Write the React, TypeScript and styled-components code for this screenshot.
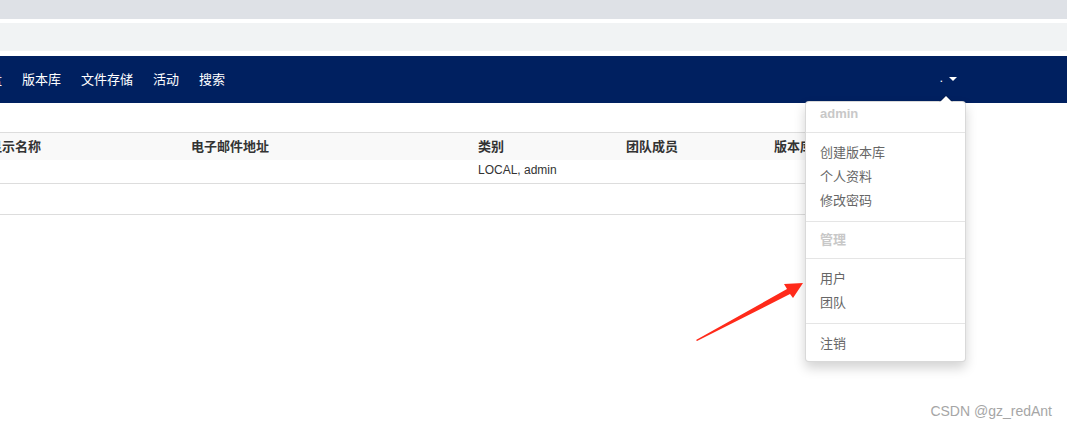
import * as React from "react";
import styled, { createGlobalStyle } from "styled-components";

const GlobalStyle = createGlobalStyle`
  html, body {
    margin: 0;
    padding: 0;
    background: #fff;
    overflow: hidden;
  }
  body {
    font-family: "Liberation Sans", "Noto Sans CJK SC", sans-serif;
    font-size: 13px;
    color: #333;
  }
`;

const Page = styled.div`
  position: relative;
  width: 1067px;
  height: 428px;
  overflow: hidden;
`;

const TabStrip = styled.div`
  height: 19px;
  background: #dee1e6;
  margin-bottom: 4px;
`;

const AddressBar = styled.div`
  height: 28px;
  background: #f1f3f4;
  margin-bottom: 5px;
`;

const NavBar = styled.nav`
  height: 47px;
  background: #002060;
  display: flex;
  align-items: center;
`;

// the page is scrolled a little to the right, so the first item is clipped
const NavList = styled.ul`
  display: flex;
  list-style: none;
  margin: 0 0 0 -47px;
  padding: 0;
`;

const NavItem = styled.li`
  padding: 0 10px;
  color: #fff;
  font-size: 13px;
  line-height: 20px;
  white-space: nowrap;
`;

const UserMenu = styled.div`
  position: relative;
  margin-left: auto;
  margin-right: 110px;
  height: 100%;
  display: flex;
  align-items: center;
  gap: 6px;
  color: #fff;
`;

const UserName = styled.span`
  font-size: 13px;
  line-height: 13px;
  margin-bottom: 4px;
`;

const Caret = styled.span`
  width: 0;
  height: 0;
  border-left: 4px solid transparent;
  border-right: 4px solid transparent;
  border-top: 4px solid #fff;
  margin-top: -1px;
`;

const Dropdown = styled.div`
  position: absolute;
  top: 100%;
  right: -9px;
  margin-top: -2px;
  width: 159px;
  background: #fff;
  border: 1px solid rgba(0, 0, 0, 0.15);
  border-radius: 4px;
  box-shadow: 0 6px 12px rgba(0, 0, 0, 0.175);
  padding: 2px 0 5px;
  z-index: 5;

  &::before,
  &::after {
    content: "";
    position: absolute;
    right: 13px;
    width: 0;
    height: 0;
    border-left: 6px solid transparent;
    border-right: 6px solid transparent;
  }
  &::before {
    top: -7px;
    right: 12px;
    border-left-width: 7px;
    border-right-width: 7px;
    border-bottom: 7px solid rgba(0, 0, 0, 0.2);
  }
  &::after {
    top: -6px;
    border-bottom: 6px solid #fff;
  }
`;

const MenuHeader = styled.div`
  height: 20px;
  line-height: 20px;
  padding: 0 14px;
  font-weight: bold;
  color: #c8c8c8;
`;

const MenuItem = styled.div`
  height: 24px;
  line-height: 24px;
  padding: 0 14px;
  color: #666;
  white-space: nowrap;
`;

const Divider = styled.div`
  height: 1px;
  margin: 8px 0;
  background: #e5e5e5;
`;

const Content = styled.main`
  padding-top: 29px;
`;

const Table = styled.div`
  display: grid;
  grid-template-columns: 202px 287px 148px 148px 1fr;
  width: 979px;
  margin-left: -19px;
`;

const HeadCell = styled.div`
  height: 27px;
  line-height: 27px;
  padding-left: 8px;
  border-top: 1px solid #ddd;
  background: #f9f9f9;
  font-weight: bold;
  color: #333;
  white-space: nowrap;
`;

const Cell = styled.div<{ $tall?: boolean }>`
  height: ${(p) => (p.$tall ? "30px" : "23px")};
  line-height: 21px;
  padding-left: 8px;
  font-size: 12px;
  color: #333;
  border-bottom: 1px solid #ddd;
`;

const Watermark = styled.div`
  position: absolute;
  right: 15px;
  top: 403px;
  font-size: 14px;
  color: #a6a6a6;
`;

const ArrowLayer = styled.svg`
  position: absolute;
  left: 0;
  top: 0;
  pointer-events: none;
  z-index: 6;
`;

const navItems = ["仪表盘", "版本库", "文件存储", "活动", "搜索"];
const columns = ["显示名称", "电子邮件地址", "类别", "团队成员", "版本库"];
const row = ["", "", "LOCAL, admin", "", ""];

const App = () => {
  return (
    <Page>
      <GlobalStyle />
      <TabStrip />
      <AddressBar />
      <NavBar>
        <NavList>
          {navItems.map((n) => (
            <NavItem key={n}>{n}</NavItem>
          ))}
        </NavList>
        <UserMenu>
          <UserName>.</UserName>
          <Caret />
          <Dropdown>
            <MenuHeader>admin</MenuHeader>
            <Divider />
            <MenuItem>创建版本库</MenuItem>
            <MenuItem>个人资料</MenuItem>
            <MenuItem>修改密码</MenuItem>
            <Divider />
            <MenuHeader>管理</MenuHeader>
            <Divider />
            <MenuItem>用户</MenuItem>
            <MenuItem>团队</MenuItem>
            <Divider />
            <MenuItem>注销</MenuItem>
          </Dropdown>
        </UserMenu>
      </NavBar>
      <Content>
        <Table>
          {columns.map((c) => (
            <HeadCell key={c}>{c}</HeadCell>
          ))}
          {row.map((c, i) => (
            <Cell key={"r" + i}>{c}</Cell>
          ))}
          {columns.map((c) => (
            <Cell key={"e" + c} $tall />
          ))}
        </Table>
      </Content>
      <ArrowLayer width="1067" height="428" viewBox="0 0 1067 428">
        <polygon
          points="696,340 787,289 784,284 803,283 793,298 790,294 697,341"
          fill="#ff2a1a"
        />
      </ArrowLayer>
      <Watermark>CSDN @gz_redAnt</Watermark>
    </Page>
  );
};

export default App;
